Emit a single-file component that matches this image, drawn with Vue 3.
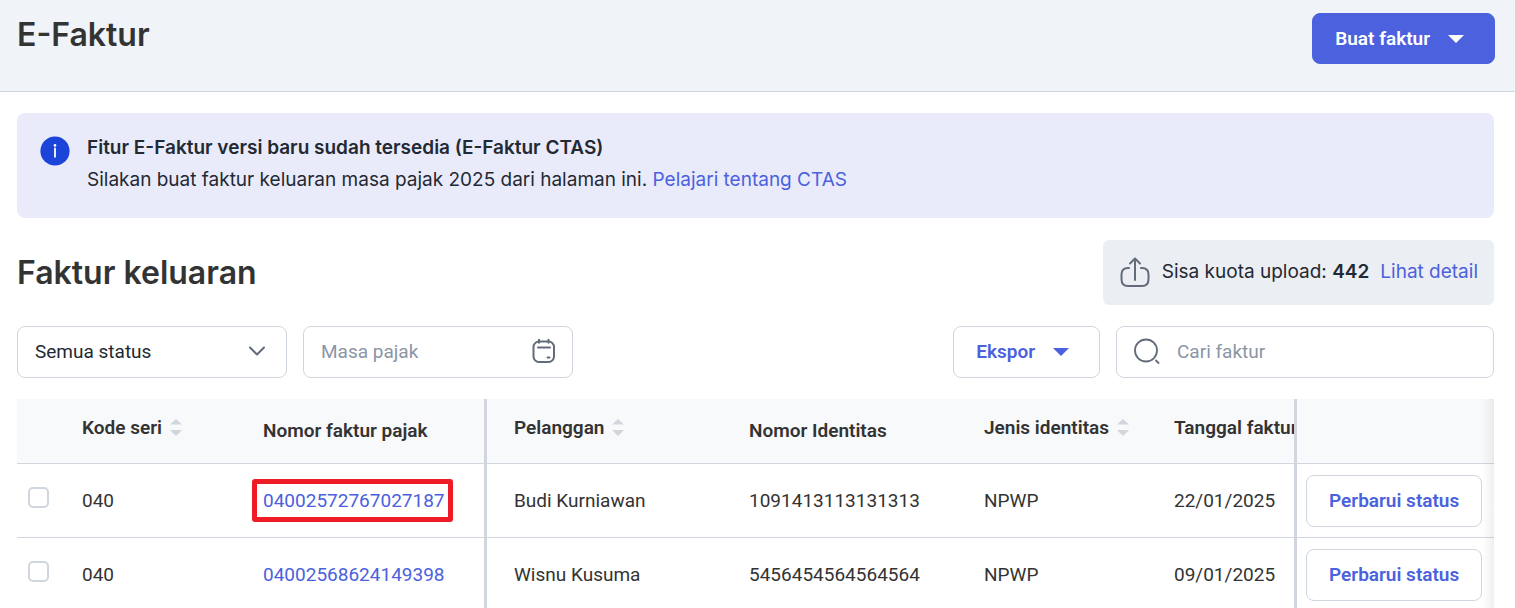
<template>
  <div class="page">
    <header class="page-header">
      <h1>E-Faktur</h1>
      <button type="button" class="btn btn-primary">
        Buat faktur
        <svg class="caret" viewBox="0 0 16 8"><path d="M0 0h16L8 8z" /></svg>
      </button>
    </header>

    <main class="content">
      <section class="banner">
        <svg class="info-icon" viewBox="0 0 30 30">
          <circle cx="15" cy="15" r="14.6" fill="#1c44d8" />
          <circle cx="15" cy="9.4" r="1.3" fill="#fff" />
          <path d="M15 12.4v8.4" stroke="#fff" stroke-width="1.8" />
        </svg>
        <div class="banner-text">
          <p class="banner-title">Fitur E-Faktur versi baru sudah tersedia (E-Faktur CTAS)</p>
          <p>
            Silakan buat faktur keluaran masa pajak 2025 dari halaman ini.
            <a href="#">Pelajari tentang CTAS</a>
          </p>
        </div>
      </section>

      <section class="section-head">
        <h2>Faktur keluaran</h2>
        <div class="quota">
          <svg class="upload-icon" viewBox="0 0 32 32">
            <path d="M10 12H9c-4.500 0-6.500 2.200-6.500 6.500v4.500c0 5 2 7 6.500 7h14c4.500 0 6.500-2 6.500-7v-4.500c0-4.300-2-6.500-6.500-6.500h-1" />
            <path d="M16 24V2.500M11 7.500l5-5 5 5" />
          </svg>
          <span>Sisa kuota upload: <strong>442</strong></span>
          <a href="#">Lihat detail</a>
        </div>
      </section>

      <section class="filters">
        <div class="field">
          <select v-model="status" aria-label="Status">
            <option value="all">Semua status</option>
          </select>
          <svg class="chevron" viewBox="0 0 16 10"><path d="M1 1.500l7 7 7-7" /></svg>
        </div>
        <div class="field">
          <input v-model="period" type="text" placeholder="Masa pajak" aria-label="Masa pajak" />
          <svg class="calendar" viewBox="0 0 24 26">
            <rect x="2.500" y="3.500" width="20.500" height="20.500" rx="5.500" />
            <path d="M8 1.800v3M17.500 1.800v3M7 9.500h12M16.500 19.500h2" />
          </svg>
        </div>
        <button type="button" class="btn btn-outline export">
          Ekspor
          <svg class="caret" viewBox="0 0 16 8"><path d="M0 0h16L8 8z" /></svg>
        </button>
        <div class="field search">
          <svg class="magnifier" viewBox="0 0 26 26">
            <circle cx="12" cy="12.500" r="11" />
            <path d="M22 22.500l2.500 2.500" />
          </svg>
          <input v-model="query" type="search" placeholder="Cari faktur" aria-label="Cari faktur" />
        </div>
      </section>

      <div class="table-wrap">
        <table>
          <colgroup>
            <col v-for="(col, i) in columns" :key="i" :class="col.cls" />
          </colgroup>
          <thead>
            <tr>
              <th v-for="(col, i) in columns" :key="i" :class="col.cls">
                <button v-if="col.sortable" type="button" class="sort">
                  {{ col.label }}
                  <svg viewBox="0 0 12 18"><path d="M0 6.500h12L6 1zM0 12h12l-6 6z" /></svg>
                </button>
                <template v-else>{{ col.label }}</template>
              </th>
            </tr>
          </thead>
          <tbody>
            <tr v-for="row in rows" :key="row.number">
              <td class="c-check">
                <input type="checkbox" :aria-label="`Pilih faktur ${row.number}`" />
              </td>
              <td>{{ row.code }}</td>
              <td class="c-number">
                <a href="#" :class="{ marked: row.marked }">{{ row.number }}</a>
              </td>
              <td class="c-customer">{{ row.customer }}</td>
              <td>{{ row.identity }}</td>
              <td>{{ row.type }}</td>
              <td>{{ row.date }}</td>
              <td class="c-action">
                <button type="button" class="btn btn-outline">Perbarui status</button>
              </td>
            </tr>
          </tbody>
        </table>
      </div>
    </main>
  </div>
</template>

<script setup>
import { ref } from 'vue'

const status = ref('all')
const period = ref('')
const query = ref('')

const columns = [
  { label: '', cls: 'c-check' },
  { label: 'Kode seri', cls: 'c-code', sortable: true },
  { label: 'Nomor faktur pajak', cls: 'c-number' },
  { label: 'Pelanggan', cls: 'c-customer', sortable: true },
  { label: 'Nomor Identitas', cls: 'c-identity' },
  { label: 'Jenis identitas', cls: 'c-type', sortable: true },
  { label: 'Tanggal faktur', cls: 'c-date', sortable: true },
  { label: '', cls: 'c-action' }
]

const rows = [
  {
    code: '040',
    number: '04002572767027187',
    customer: 'Budi Kurniawan',
    identity: '1091413113131313',
    type: 'NPWP',
    date: '22/01/2025',
    marked: true
  },
  {
    code: '040',
    number: '04002568624149398',
    customer: 'Wisnu Kusuma',
    identity: '5456454564564564',
    type: 'NPWP',
    date: '09/01/2025',
    marked: false
  }
]
</script>

<style>
body {
  margin: 0;
  background: #fff;
}
</style>

<style scoped>
.page {
  height: 100vh;
  overflow: hidden;
  font-family: Roboto, "Liberation Sans", sans-serif;
  font-size: 19px;
  color: #333;
}

.page *,
.page *::before,
.page *::after {
  box-sizing: border-box;
}

h1,
h2,
p {
  margin: 0;
}

h1,
h2 {
  font-family: Inter, sans-serif;
  font-size: 32px;
  font-weight: 600;
  line-height: 44px;
}

a {
  color: #4b61dd;
  text-decoration: none;
}

svg {
  flex: none;
  fill: none;
  stroke-linecap: round;
  stroke-linejoin: round;
}

.page-header {
  display: flex;
  justify-content: space-between;
  align-items: flex-start;
  height: 92px;
  padding: 13px 20px 0 17px;
  background: #f0f3f8;
  border-bottom: 1px solid #d0d6e0;
}

.btn {
  display: inline-flex;
  align-items: center;
  justify-content: center;
  height: 52px;
  padding: 0 22px;
  border: 1px solid #d0d6dd;
  border-radius: 8px;
  font: 600 19px/24px Roboto, "Liberation Sans", sans-serif;
  white-space: nowrap;
}

.btn-primary {
  gap: 18px;
  height: 51px;
  padding-right: 30px;
  background: #4b61dd;
  border-color: #4b61dd;
  color: #fff;
}

.btn-outline {
  background: #fff;
  color: #4b61dd;
}

.caret {
  width: 16px;
  height: 8px;
  fill: currentColor;
}

.content {
  padding: 21px 21px 0 17px;
}

.banner {
  display: flex;
  gap: 17px;
  padding: 19px 23px 22px;
  border-radius: 8px;
  background: #e9ebfa;
  color: #232933;
  font-family: Inter, sans-serif;
  line-height: 32px;
}

.info-icon {
  width: 30px;
  height: 30px;
  margin-top: 4px;
}

.banner-title {
  font-weight: 600;
}

.section-head {
  display: flex;
  justify-content: space-between;
  align-items: center;
  margin-top: 22px;
}

.quota {
  display: flex;
  align-items: center;
  gap: 11px;
  height: 65px;
  padding: 0 16px 2px 16px;
  border-radius: 6px;
  background: #ebeef2;
  color: #232933;
  font-family: Inter, sans-serif;
}

.quota strong {
  font-weight: 600;
}

.upload-icon {
  width: 32px;
  height: 32px;
  stroke: #626b79;
  stroke-width: 2;
}

.filters {
  display: flex;
  gap: 16px;
  margin-top: 21px;
}

.field {
  display: flex;
  align-items: center;
  width: 270px;
  height: 52px;
  padding: 0 17px 2px;
  border: 1px solid #d0d6dd;
  border-radius: 8px;
  background: #fff;
}

.field select,
.field input {
  flex: 1;
  min-width: 0;
  height: 100%;
  padding: 0;
  border: 0;
  outline: 0;
  appearance: none;
  background: transparent;
  font: inherit;
  color: #232933;
}

.field input::placeholder {
  color: #8b95a5;
  opacity: 1;
}

.chevron {
  width: 16px;
  height: 10px;
  margin-right: 4px;
  stroke: #626b79;
  stroke-width: 2;
  pointer-events: none;
}

.calendar {
  width: 24px;
  height: 26px;
  stroke: #626b79;
  stroke-width: 2;
}

.export {
  gap: 18px;
  margin-left: auto;
  padding-right: 30px;
}

.search {
  width: 378px;
  gap: 17px;
}

.magnifier {
  width: 26px;
  height: 26px;
  stroke: #626b79;
  stroke-width: 1.8;
}

.table-wrap {
  position: relative;
  margin-top: 21px;
  overflow: hidden;
}

/* scroll shadow on the right edge */
.table-wrap::after {
  content: "";
  position: absolute;
  top: 0;
  right: 0;
  bottom: 0;
  width: 12px;
  background: linear-gradient(to right, rgba(0, 0, 0, 0), rgba(0, 0, 0, 0.06));
  pointer-events: none;
}

table {
  width: 100%;
  table-layout: fixed;
  border-collapse: separate;
  border-spacing: 0;
}

th,
td {
  padding: 0 0 0 17px;
  border-bottom: 1px solid #d0d6dd;
  text-align: left;
  vertical-align: middle;
  white-space: nowrap;
}

th {
  height: 65px;
  padding-bottom: 2px;
  background: #f8f9fb;
  font-weight: 600;
  overflow: hidden;
}

td {
  height: 74px;
}

col.c-check {
  width: 48px;
}

col.c-code {
  width: 181px;
}

col.c-number {
  width: 241px;
}

col.c-customer {
  width: 245px;
}

col.c-identity {
  width: 235px;
}

col.c-type {
  width: 190px;
}

col.c-action {
  width: 200px;
}

td.c-check {
  padding: 0 0 6px 11px;
}

th.c-number,
td.c-number {
  border-right: 3px solid #d0d6dd;
}

th.c-customer,
td.c-customer {
  padding-left: 27px;
}

th.c-action,
td.c-action {
  padding-left: 9px;
  border-left: 3px solid #d0d6dd;
}

.sort {
  display: inline-flex;
  align-items: center;
  gap: 8px;
  padding: 0 0 6px;
  border: 0;
  background: none;
  font: inherit;
  color: inherit;
  vertical-align: middle;
}

.sort svg {
  width: 12px;
  height: 18px;
  fill: #d0d6dd;
}

td input[type="checkbox"] {
  display: block;
  width: 21px;
  height: 21px;
  margin: 0;
  border: 2px solid #d0d6dd;
  border-radius: 5px;
  appearance: none;
  background: #fff;
}

td input[type="checkbox"]:checked {
  border-color: #4b61dd;
  background: #4b61dd;
}

.marked {
  position: relative;
}

.marked::after {
  content: "";
  position: absolute;
  inset: -10px -8px -10px -11px;
  border: 5px solid #ee1c25;
  border-radius: 3px;
}
</style>
